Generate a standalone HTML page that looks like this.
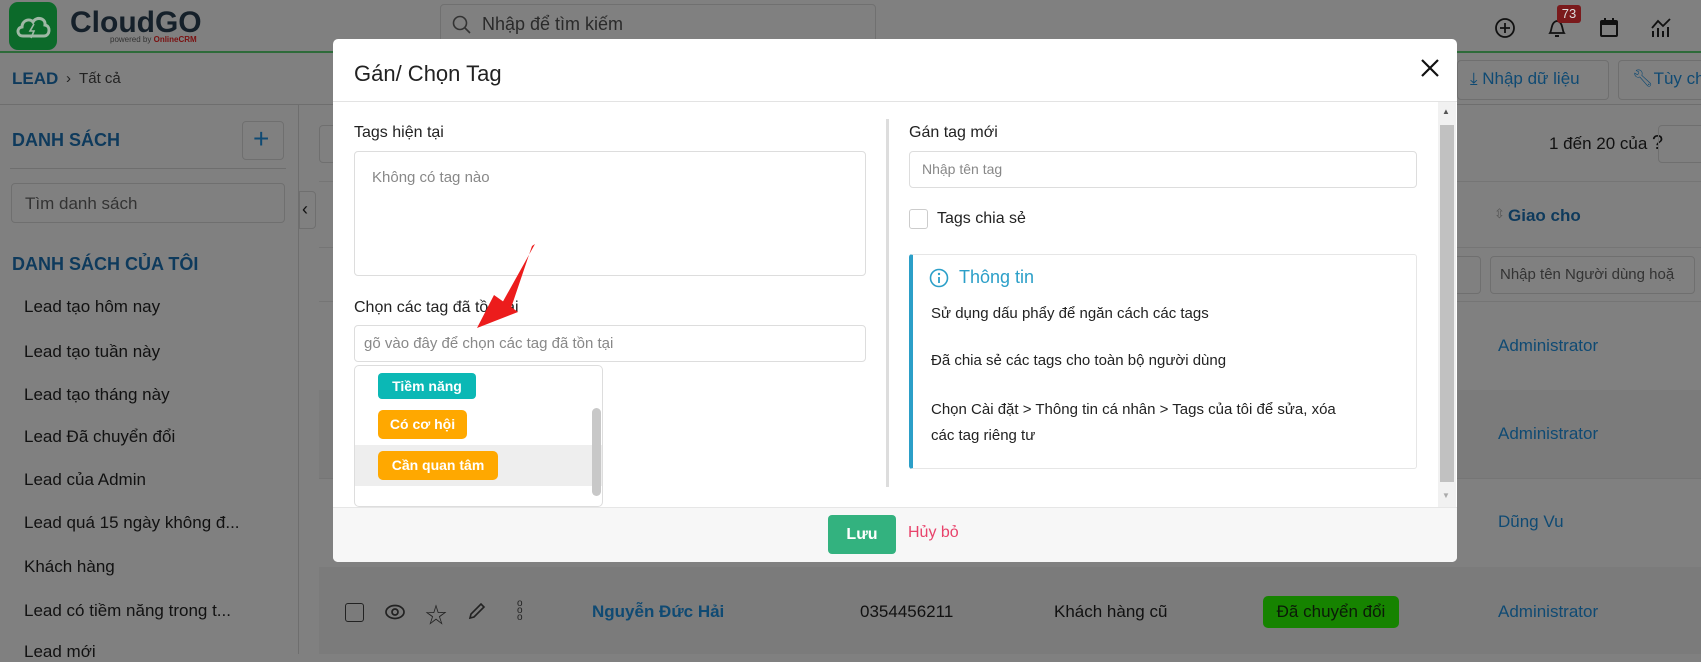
<!DOCTYPE html>
<html><head><meta charset="utf-8"><style>
*{box-sizing:border-box;margin:0;padding:0}
body{width:1701px;height:654px;overflow:hidden;position:relative;background:#808080;font-family:"Liberation Sans","Noto Sans CJK SC",sans-serif;color:#111;font-size:15px}
.a{position:absolute;white-space:nowrap}
.blue{color:#0e3a5c}
.lk{color:#0f4a73}
.inp{position:absolute;border:1px solid #6f6f6f;border-radius:4px}
</style></head><body>
<!-- page background -->
<div class="a" style="left:0;top:0;width:1701px;height:53px;background:#808080;border-bottom:2px solid #2e6b3a"></div>
<div class="a" style="left:9px;top:2px;width:48px;height:48px;background:#0c6a2a;border-radius:9px"></div>
<svg class="a" style="left:14px;top:10px" width="38" height="32" viewBox="0 0 38 32"><path d="M9 26 C3 26 2 18 8 17 C8 10 16 8 19 12 C22 6 32 8 31 15 C37 16 36 26 30 26 Z" fill="none" stroke="#9fb8a5" stroke-width="3"/><path d="M20 14 L16 21 L20 21 L17 28" fill="none" stroke="#9fb8a5" stroke-width="1.6"/></svg>
<div class="a" style="left:70px;top:6px;font-size:30px;font-weight:bold;color:#15202a">CloudGO</div>
<div class="a" style="left:110px;top:35px;font-size:8px;color:#333">powered by <b style="color:#7a1010">OnlineCRM</b></div>
<div class="inp" style="left:440px;top:4px;width:436px;height:42px;border-color:#707070"></div>
<svg class="a" style="left:452px;top:15px" width="20" height="20"><circle cx="8" cy="8" r="6.5" fill="none" stroke="#333" stroke-width="1.6"/><path d="M13 13 L18 18" stroke="#333" stroke-width="1.6"/></svg>
<div class="a" style="left:482px;top:14px;font-size:18px;color:#2a2a2a">Nhập để tìm kiếm</div>
<svg class="a" style="left:1494px;top:17px" width="22" height="22"><circle cx="11" cy="11" r="9" fill="none" stroke="#111" stroke-width="1.8"/><path d="M11 6v10M6 11h10" stroke="#111" stroke-width="1.8"/></svg>
<svg class="a" style="left:1546px;top:16px" width="22" height="24"><path d="M4 17 C6 14 5 6 11 5 C17 6 16 14 18 17 Z" fill="none" stroke="#111" stroke-width="1.8"/><path d="M9 20h4" stroke="#111" stroke-width="2"/></svg>
<div class="a" style="left:1557px;top:5px;width:24px;height:18px;background:#7a1a1c;border-radius:3px;color:#ddd;font-size:13px;text-align:center;line-height:18px">73</div>
<svg class="a" style="left:1598px;top:16px" width="22" height="22"><rect x="3" y="5" width="16" height="15" rx="1" fill="none" stroke="#111" stroke-width="2"/><rect x="3" y="5" width="16" height="4" fill="#111"/><path d="M7 2v4M15 2v4" stroke="#111" stroke-width="2"/></svg>
<svg class="a" style="left:1650px;top:16px" width="24" height="22"><path d="M2 12 L8 5 L13 10 L20 3" fill="none" stroke="#111" stroke-width="1.8"/><path d="M3 15v6M8 12v9M13 15v6M18 11v10" stroke="#111" stroke-width="2"/></svg>

<div class="a" style="left:0;top:104px;width:1701px;height:1px;background:#6e6e6e"></div>
<div class="a blue" style="left:12px;top:69px;font-size:17px;font-weight:bold">LEAD</div>
<div class="a" style="left:66px;top:70px;font-size:15px;color:#222">›&nbsp; Tất cả</div>
<div class="inp" style="left:1457px;top:60px;width:152px;height:40px"></div>
<div class="a lk" style="left:1470px;top:69px;font-size:17px">⤓ Nhập dữ liệu</div>
<div class="inp" style="left:1618px;top:60px;width:100px;height:40px"></div>
<div class="a lk" style="left:1632px;top:69px;font-size:17px">🔧︎Tùy ch</div>

<div class="a" style="left:298px;top:105px;width:1px;height:549px;background:#6e6e6e"></div>
<div class="a blue" style="left:12px;top:130px;font-size:18px;font-weight:bold">DANH SÁCH</div>
<div class="inp" style="left:242px;top:121px;width:42px;height:39px"></div>
<div class="a lk" style="left:253px;top:123px;font-size:28px">+</div>
<div class="a" style="left:10px;top:168px;width:276px;height:1px;background:#6e6e6e"></div>
<div class="inp" style="left:11px;top:183px;width:274px;height:40px"></div>
<div class="a" style="left:25px;top:194px;font-size:17px;color:#333">Tìm danh sách</div>
<div class="a blue" style="left:12px;top:254px;font-size:18px;font-weight:bold">DANH SÁCH CỦA TÔI</div>
<div class="a" style="left:24px;top:297px;font-size:17px">Lead tạo hôm nay</div>
<div class="a" style="left:24px;top:342px;font-size:17px">Lead tạo tuần này</div>
<div class="a" style="left:24px;top:385px;font-size:17px">Lead tạo tháng này</div>
<div class="a" style="left:24px;top:427px;font-size:17px">Lead Đã chuyển đổi</div>
<div class="a" style="left:24px;top:470px;font-size:17px">Lead của Admin</div>
<div class="a" style="left:24px;top:513px;font-size:17px">Lead quá 15 ngày không đ...</div>
<div class="a" style="left:24px;top:557px;font-size:17px">Khách hàng</div>
<div class="a" style="left:24px;top:601px;font-size:17px">Lead có tiềm năng trong t...</div>
<div class="a" style="left:24px;top:642px;font-size:17px">Lead mới</div>
<div class="inp" style="left:299px;top:191px;width:17px;height:38px;border-radius:0 4px 4px 0"></div>
<div class="a" style="left:302px;top:199px;font-size:18px">‹</div>
<div class="inp" style="left:319px;top:125px;width:20px;height:38px"></div>

<div class="a" style="left:319px;top:181px;width:1382px;height:1px;background:#757575"></div>
<div class="a" style="left:319px;top:247px;width:1382px;height:1px;background:#757575"></div>
<div class="a" style="left:319px;top:301px;width:1382px;height:1px;background:#757575"></div>
<div class="a" style="left:319px;top:390px;width:1382px;height:88px;background:#7b7b7b"></div>
<div class="a" style="left:319px;top:478px;width:1382px;height:1px;background:#757575"></div>
<div class="a" style="left:319px;top:567px;width:1382px;height:87px;background:#7b7b7b"></div>
<div class="a" style="left:1549px;top:132px;font-size:17px;color:#111">1 đến 20 của <span style="font-size:20px">?</span></div>
<div class="inp" style="left:1658px;top:125px;width:50px;height:38px"></div>
<div class="a" style="left:1494px;top:206px;font-size:13px;color:#555">⇳</div>
<div class="a blue" style="left:1508px;top:206px;font-size:17px;font-weight:bold">Giao cho</div>
<div class="inp" style="left:1420px;top:256px;width:61px;height:38px"></div>
<div class="inp" style="left:1490px;top:256px;width:205px;height:38px"></div>
<div class="a" style="left:1500px;top:266px;font-size:15px;color:#333">Nhập tên Người dùng hoặ</div>
<div class="a lk" style="left:1498px;top:336px;font-size:17px">Administrator</div>
<div class="a lk" style="left:1498px;top:424px;font-size:17px">Administrator</div>
<div class="a lk" style="left:1498px;top:512px;font-size:17px">Dũng Vu</div>
<div class="a lk" style="left:1498px;top:602px;font-size:17px">Administrator</div>
<div class="a" style="left:345px;top:603px;width:19px;height:19px;border:1.5px solid #222;border-radius:3px"></div>
<svg class="a" style="left:384px;top:602px" width="22" height="20"><ellipse cx="11" cy="10" rx="9" ry="6.5" fill="none" stroke="#222" stroke-width="1.7"/><circle cx="11" cy="10" r="3" fill="none" stroke="#222" stroke-width="1.7"/></svg>
<div class="a" style="left:425px;top:598px;font-size:22px;color:#222">☆</div>
<svg class="a" style="left:467px;top:601px" width="20" height="20"><path d="M3 17 L4 13 L14 3 L17 6 L7 16 Z" fill="none" stroke="#222" stroke-width="1.6"/></svg>
<div class="a" style="left:517px;top:600px;font-size:10px;line-height:7px;color:#222">o<br>o<br>o</div>
<div class="a lk" style="left:592px;top:602px;font-size:17px;font-weight:bold">Nguyễn Đức Hải</div>
<div class="a" style="left:860px;top:602px;font-size:17px">0354456211</div>
<div class="a" style="left:1054px;top:602px;font-size:17px">Khách hàng cũ</div>
<div class="a" style="left:1263px;top:596px;width:136px;height:32px;background:#168300;border-radius:5px;font-size:17px;line-height:32px;text-align:center;color:#0b1a08">Đã chuyển đổi</div>

<!-- modal -->
<div class="a" style="left:333px;top:39px;width:1124px;height:523px;background:#fff;border-radius:5px;overflow:hidden">
  <div class="a" style="left:21px;top:22px;font-size:22px;color:#222">Gán/ Chọn Tag</div>
  <svg class="a" style="left:1086px;top:18px" width="22" height="22"><path d="M3 3L19 19M19 3L3 19" stroke="#111" stroke-width="2.2"/></svg>
  <div class="a" style="left:0;top:62px;width:1124px;height:1px;background:#e3e3e3"></div>
  <!-- left col -->
  <div class="a" style="left:21px;top:85px;font-size:16px;color:#222">Tags hiện tại</div>
  <div class="a" style="left:21px;top:112px;width:512px;height:125px;border:1px solid #ddd;border-radius:4px"></div>
  <div class="a" style="left:39px;top:130px;font-size:15px;color:#888">Không có tag nào</div>
  <div class="a" style="left:21px;top:260px;font-size:16px;color:#222">Chọn các tag đã tồn tại</div>
  <div class="a" style="left:21px;top:286px;width:512px;height:37px;border:1px solid #ddd;border-radius:4px"></div>
  <div class="a" style="left:31px;top:296px;font-size:15px;color:#888">gõ vào đây để chọn các tag đã tồn tại</div>
  <div class="a" style="left:21px;top:326px;width:249px;height:142px;border:1px solid #ddd;border-radius:5px;background:#fff;overflow:hidden">
    <div class="a" style="left:0;top:79px;width:248px;height:41px;background:#eee"></div>
    <div class="a" style="left:23px;top:7px;width:98px;height:26px;background:#0bb8b5;border-radius:4px;color:#fff;font-size:14px;font-weight:bold;line-height:26px;text-align:center">Tiềm năng</div>
    <div class="a" style="left:23px;top:44px;width:89px;height:29px;background:#ffa800;border-radius:5px;color:#fff;font-size:14px;font-weight:bold;line-height:29px;text-align:center">Có cơ hội</div>
    <div class="a" style="left:23px;top:85px;width:120px;height:29px;background:#ffa800;border-radius:5px;color:#fff;font-size:14px;font-weight:bold;line-height:29px;text-align:center">Cần quan tâm</div>
    <div class="a" style="left:237px;top:42px;width:9px;height:88px;background:#c8c8c8;border-radius:5px"></div>
  </div>
  <!-- divider -->
  <div class="a" style="left:553px;top:80px;width:3px;height:368px;background:#ddd"></div>
  <!-- right col -->
  <div class="a" style="left:576px;top:85px;font-size:16px;color:#222">Gán tag mới</div>
  <div class="a" style="left:576px;top:112px;width:508px;height:37px;border:1px solid #ddd;border-radius:4px"></div>
  <div class="a" style="left:589px;top:122px;font-size:14px;color:#888">Nhập tên tag</div>
  <div class="a" style="left:576px;top:170px;width:19px;height:20px;border:1px solid #ccc;border-radius:3px"></div>
  <div class="a" style="left:604px;top:171px;font-size:16px;color:#222">Tags chia sẻ</div>
  <div class="a" style="left:576px;top:215px;width:508px;height:215px;border:1px solid #e6e6e6;border-left:4px solid #2b9fc8;border-radius:3px"></div>
  <svg class="a" style="left:596px;top:229px" width="20" height="20"><circle cx="10" cy="10" r="8.5" fill="none" stroke="#2b9fc8" stroke-width="1.6"/><circle cx="10" cy="6" r="1.2" fill="#2b9fc8"/><path d="M10 9v6" stroke="#2b9fc8" stroke-width="1.8"/></svg>
  <div class="a" style="left:626px;top:228px;font-size:18px;color:#2b9fc8">Thông tin</div>
  <div class="a" style="left:598px;top:266px;font-size:15px;color:#222">Sử dụng dấu phẩy để ngăn cách các tags</div>
  <div class="a" style="left:598px;top:313px;font-size:15px;color:#222">Đã chia sẻ các tags cho toàn bộ người dùng</div>
  <div class="a" style="left:598px;top:362px;font-size:15px;color:#222">Chọn Cài đặt &gt; Thông tin cá nhân &gt; Tags của tôi để sửa, xóa</div>
  <div class="a" style="left:598px;top:388px;font-size:15px;color:#222">các tag riêng tư</div>
  <!-- scrollbar -->
  <div class="a" style="left:1105px;top:63px;width:18px;height:405px;background:#f1f1f1"></div>
  <div class="a" style="left:1107px;top:86px;width:14px;height:357px;background:#c1c1c1"></div>
  <div class="a" style="left:1109px;top:68px;font-size:8px;color:#555">▲</div>
  <div class="a" style="left:1109px;top:452px;font-size:8px;color:#aaa">▼</div>
  <!-- footer -->
  <div class="a" style="left:0;top:468px;width:1124px;height:55px;background:#f7f7f7;border-top:1px solid #e6e6e6"></div>
  <div class="a" style="left:495px;top:476px;width:68px;height:39px;background:#33b27f;border-radius:4px;color:#fff;font-size:16px;font-weight:bold;line-height:39px;text-align:center">Lưu</div>
  <div class="a" style="left:575px;top:485px;font-size:16px;color:#e8436b">Hủy bỏ</div>
</div>
<!-- red arrow -->
<svg class="a" style="left:460px;top:240px" width="90" height="100"><polygon points="75,4 41,65 50,71 72,6" fill="#ec1c1c"/><polygon points="17,88 34,55 58,72" fill="#ec1c1c"/></svg>
</body></html>
